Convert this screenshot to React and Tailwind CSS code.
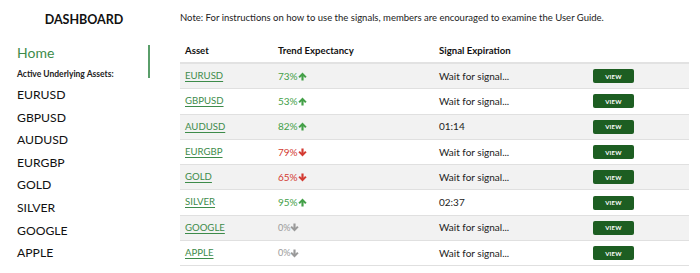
import React from "react";

const assets = [
  { name: "EURUSD", pct: "73%", dir: "up", exp: "Wait for signal..." },
  { name: "GBPUSD", pct: "53%", dir: "up", exp: "Wait for signal..." },
  { name: "AUDUSD", pct: "82%", dir: "up", exp: "01:14" },
  { name: "EURGBP", pct: "79%", dir: "down", exp: "Wait for signal..." },
  { name: "GOLD", pct: "65%", dir: "down", exp: "Wait for signal..." },
  { name: "SILVER", pct: "95%", dir: "up", exp: "02:37" },
  { name: "GOOGLE", pct: "0%", dir: "flat", exp: "Wait for signal..." },
  { name: "APPLE", pct: "0%", dir: "flat", exp: "Wait for signal..." },
];

function Arrow({ down, color }) {
  return (
    <svg width="9" height="9" viewBox="0 0 10 10" className="inline-block" style={{ transform: down ? "rotate(180deg)" : "none" }}>
      <path d="M5 0.5 L9.6 5.2 L7.9 6.6 L6.2 4.8 L6.2 9.5 L3.8 9.5 L3.8 4.8 L2.1 6.6 L0.4 5.2 Z" fill={color} />
    </svg>
  );
}

export default function App() {
  return (
    <div className="w-[700px] h-[273px] bg-white flex overflow-hidden" style={{ fontFamily: "Lato, 'Open Sans', sans-serif" }}>
      <div className="w-[180px] shrink-0 flex flex-col">
        <div className="w-[168px] text-center font-bold text-[12.5px] text-[#111] pt-[11px] h-[45px]">DASHBOARD</div>
        <div className="flex">
          <div className="flex-1 pl-[17px]">
            <div className="text-[14px] text-[#3d8b4a] leading-[18px] mt-[-1px]">Home</div>
            <div className="text-[8.5px] font-bold text-[#222] mt-[6px] leading-[12px]">Active Underlying Assets:</div>
          </div>
          <div className="w-[2px] h-[33px] bg-[#5a9e6a] mr-[30px]"></div>
        </div>
        <div className="pl-[17px] mt-[4px] flex flex-col">
          {assets.map((a) => (
            <div key={a.name} className="h-[22.6px] leading-[22.6px] text-[12.2px] text-[#111]">{a.name}</div>
          ))}
        </div>
      </div>
      <div className="flex-1 pr-[11px]">
        <div className="text-[9.5px] text-[#222] pt-[11px] h-[40px] leading-[14px]">
          Note: For instructions on how to use the signals, members are encouraged to examine the User Guide.
        </div>
        <div className="grid grid-cols-[93px_161px_154px_1fr] h-[24px] items-center border-b-2 border-[#e2e2e2] text-[9.6px] font-bold text-[#111]">
          <div className="pl-[5px]">Asset</div>
          <div className="pl-[5px]">Trend Expectancy</div>
          <div className="pl-[5px]">Signal Expiration</div>
          <div></div>
        </div>
        {assets.map((a, i) => {
          const color = a.dir === "up" ? "#43a047" : a.dir === "down" ? "#d33a31" : "#9a9a9a";
          return (
            <div
              key={a.name}
              className={`grid grid-cols-[93px_161px_154px_1fr] h-[25.3px] items-center border-b border-[#e0e0e0] ${i % 2 === 0 ? "bg-[#f2f2f2]" : "bg-white"}`}
            >
              <div className="pl-[5px] text-[9.6px] text-[#3d8b4a] underline underline-offset-[2px]">{a.name}</div>
              <div className={`pl-[5px] flex items-center ${a.dir === "flat" ? "text-[9px]" : "text-[10px]"}`} style={{ color }}>
                <span>{a.pct}</span>
                <Arrow down={a.dir !== "up"} color={color} />
              </div>
              <div className="pl-[5px] text-[10px] text-[#222]">{a.exp}</div>
              <div className="pl-[5px]">
                <div className="w-[41px] h-[14px] rounded-[2px] bg-[#1d5e22] text-white text-[6px] font-bold flex items-center justify-center tracking-[0.2px]">VIEW</div>
              </div>
            </div>
          );
        })}
      </div>
    </div>
  );
}
